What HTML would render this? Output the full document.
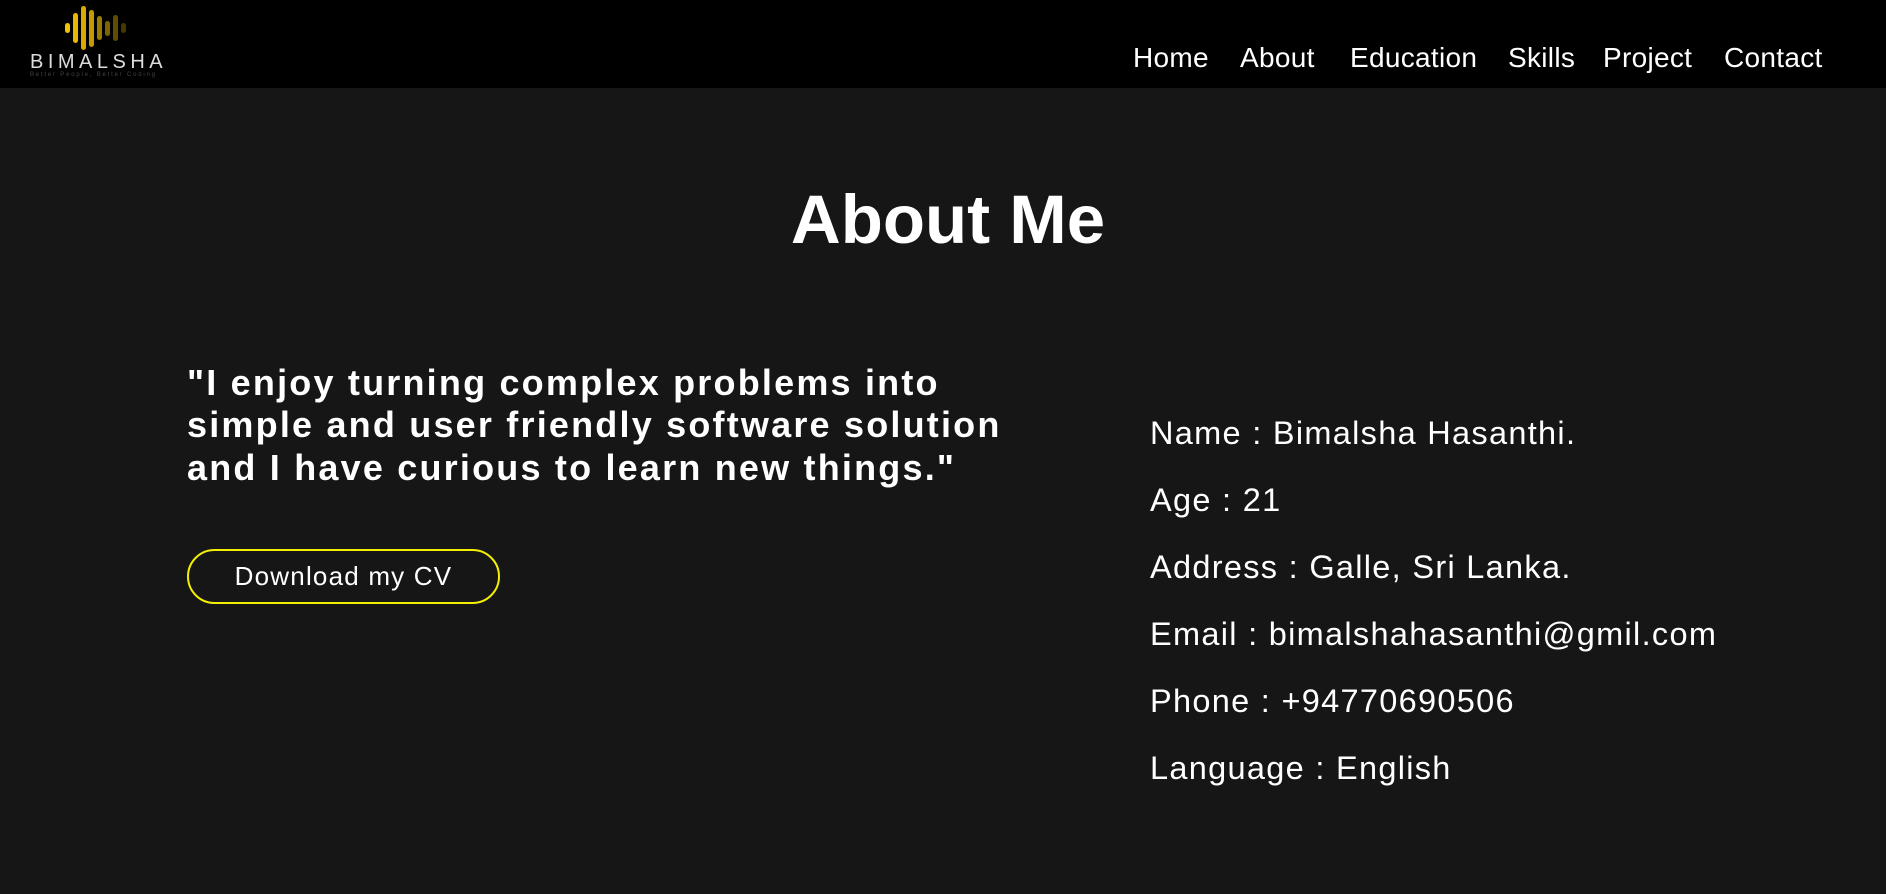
<!DOCTYPE html>
<html><head><meta charset="utf-8"><style>
*{margin:0;padding:0;box-sizing:border-box}
body{width:1886px;height:894px;background:#161616;color:#fff;font-family:"Liberation Sans",sans-serif;position:relative;overflow:hidden}
.hdr{position:absolute;left:0;top:0;width:1886px;height:88px;background:#000}
.nav{position:absolute;font-size:28px;line-height:1;top:44px;letter-spacing:0.3px}
.t{position:absolute;white-space:nowrap}
.q{position:absolute;left:187px;font-size:36px;font-weight:bold;white-space:nowrap;letter-spacing:2.2px}
.i{position:absolute;left:1150px;font-size:32.5px;white-space:nowrap;letter-spacing:1.3px}
.btn{position:absolute;left:187px;top:549px;width:313px;height:55px;border:2.5px solid #f2f000;border-radius:28px;font-size:26px;text-align:center;line-height:50px;letter-spacing:1.2px}
</style></head><body>
<div class="hdr">
<svg style="position:absolute;left:60px;top:4px" width="75" height="46">
<rect x="5" y="19" width="5" height="10" rx="2.5" fill="#f2c400"/>
<rect x="13" y="9" width="5" height="30" rx="2.5" fill="#e8b800"/>
<rect x="21" y="2" width="5" height="44" rx="2.5" fill="#d9ab00"/>
<rect x="29" y="6" width="5" height="37" rx="2.5" fill="#c49a00"/>
<rect x="37" y="12" width="5" height="24" rx="2.5" fill="#9c7a00"/>
<rect x="45" y="17" width="5" height="15" rx="2.5" fill="#7d6400"/>
<rect x="53" y="11" width="5" height="26" rx="2.5" fill="#5e4c00"/>
<rect x="61" y="19" width="5" height="10" rx="2.5" fill="#463800"/>
</svg>
<div class="t" style="left:30px;top:51px;font-size:20px;letter-spacing:4.5px;color:#ddd">BIMALSHA</div>
<div class="t" style="left:30px;top:72px;font-size:6px;letter-spacing:1.8px;color:#444">Better People, Better Coding</div>
<div class="nav t" style="left:1133px">Home</div>
<div class="nav t" style="left:1240px">About</div>
<div class="nav t" style="left:1350px">Education</div>
<div class="nav t" style="left:1508px">Skills</div>
<div class="nav t" style="left:1603px">Project</div>
<div class="nav t" style="left:1724px">Contact</div>
</div>
<div class="t" style="left:0;width:1896px;text-align:center;top:180px;font-size:69px;font-weight:bold">About Me</div>
<div class="q" style="top:362px">"I enjoy turning complex problems into</div>
<div class="q" style="top:404px">simple and user friendly software solution</div>
<div class="q" style="top:447px">and I have curious to learn new things."</div>
<div class="btn">Download my CV</div>
<div class="i" style="top:415px">Name : Bimalsha Hasanthi.</div>
<div class="i" style="top:482px">Age : 21</div>
<div class="i" style="top:549px">Address : Galle, Sri Lanka.</div>
<div class="i" style="top:616px">Email : bimalshahasanthi@gmil.com</div>
<div class="i" style="top:683px">Phone : +94770690506</div>
<div class="i" style="top:750px">Language : English</div>
</body></html>
